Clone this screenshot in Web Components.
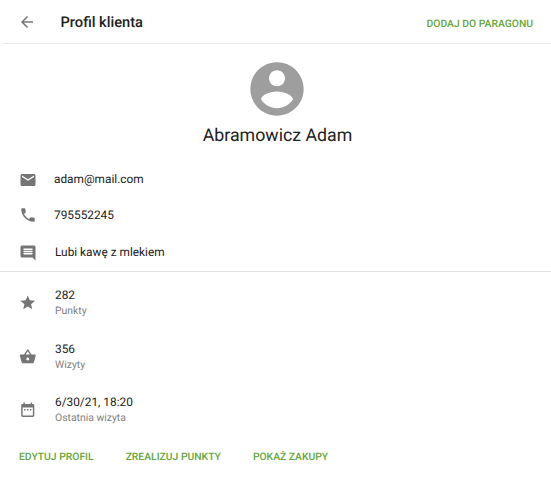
<!DOCTYPE html>
<html lang="pl">
<head>
<meta charset="utf-8">
<title>Profil klienta</title>
<style>
  body {
    background: #fff;
    color: #212121;
    font-family: Roboto, "Liberation Sans", sans-serif;
    margin: 0;
    text-rendering: geometricPrecision;
  }
</style>
</head>
<body>
<customer-profile></customer-profile>

<script>
const ICONS = {
  back: 'M20 11H7.83l5.59-5.59L12 4l-8 8 8 8 1.41-1.41L7.83 13H20v-2z',
  account: 'M12 2C6.48 2 2 6.48 2 12s4.48 10 10 10 10-4.48 10-10S17.52 2 12 2zm0 3c1.66 0 3 1.34 3 3s-1.34 3-3 3-3-1.34-3-3 1.34-3 3-3zm0 14.2c-2.5 0-4.71-1.28-6-3.22.03-1.99 4-3.08 6-3.08 1.99 0 5.97 1.09 6 3.08-1.29 1.94-3.5 3.22-6 3.22z',
  mail: 'M20 4H4c-1.1 0-1.99.9-1.99 2L2 18c0 1.1.9 2 2 2h16c1.1 0 2-.9 2-2V6c0-1.1-.9-2-2-2zm0 4l-8 5-8-5V6l8 5 8-5v2z',
  phone: 'M6.62 10.79c1.44 2.83 3.76 5.14 6.59 6.59l2.2-2.2c.27-.27.67-.36 1.02-.24 1.12.37 2.33.57 3.57.57.55 0 1 .45 1 1V20c0 .55-.45 1-1 1-9.39 0-17-7.61-17-17 0-.55.45-1 1-1h3.5c.55 0 1 .45 1 1 0 1.25.2 2.45.57 3.57.11.35.03.74-.25 1.02l-2.2 2.2z',
  comment: 'M21.99 4c0-1.1-.89-2-1.99-2H4c-1.1 0-2 .9-2 2v12c0 1.1.9 2 2 2h14l4 4-.01-18zM18 14H6v-2h12v2zm0-3H6V9h12v2zm0-3H6V6h12v2z',
  star: 'M12 17.27L18.18 21l-1.64-7.03L22 9.24l-7.19-.61L12 2 9.19 8.63 2 9.24l5.46 4.73L5.82 21z',
  basket: 'M17.21 9l-4.38-6.56c-.19-.28-.51-.42-.83-.42-.32 0-.64.14-.83.43L6.79 9H2c-.55 0-1 .45-1 1 0 .09.01.18.04.27l2.54 9.27c.23.84 1 1.46 1.92 1.46h13c.92 0 1.69-.62 1.93-1.46l2.54-9.27L23 10c0-.55-.45-1-1-1h-4.79zM9 9l3-4.4L15 9H9zm3 8c-1.1 0-2-.9-2-2s.9-2 2-2 2 .9 2 2-.9 2-2 2z',
  calendar: 'M9 11H7v2h2v-2zm4 0h-2v2h2v-2zm4 0h-2v2h2v-2zm2-7h-1V2h-2v2H8V2H6v2H5c-1.11 0-1.99.9-1.99 2L3 20c0 1.1.89 2 2 2h14c1.1 0 2-.9 2-2V6c0-1.1-.9-2-2-2zm0 16H5V9h14v11z'
};

class ProfileIcon extends HTMLElement {
  constructor() {
    super();

    const template = document.createElement( 'template' );
    template.innerHTML = `
      <style>
        :host {
          color: #757575;
          display: block;
          flex: none;
          height: var( --icon-size, 18px );
          width: var( --icon-size, 18px );
        }

        svg {
          display: block;
          fill: currentColor;
          height: 100%;
          width: 100%;
        }
      </style>
      <svg viewBox="0 0 24 24" aria-hidden="true"><path /></svg>
    `;

    // Root
    const shadowRoot = this.attachShadow( {mode: 'open'} );
    shadowRoot.appendChild( template.content.cloneNode( true ) );

    // Elements
    this.$path = shadowRoot.querySelector( 'path' );
  }

  // Attributes
  static get observedAttributes() {
    return ['name'];
  }

  // Render
  attributeChangedCallback( name, old, value ) {
    this.$path.setAttribute( 'd', ICONS[value] || '' );
  }
}

window.customElements.define( 'profile-icon', ProfileIcon );

class ProfileButton extends HTMLElement {
  constructor() {
    super();

    const template = document.createElement( 'template' );
    template.innerHTML = `
      <style>
        :host {
          display: block;
        }

        button {
          background: none;
          border: none;
          color: #64a63a;
          cursor: pointer;
          display: block;
          font: 500 10.35px/16px Roboto, "Liberation Sans", sans-serif;
          margin: 0;
          padding: 0;
          text-rendering: geometricPrecision;
          white-space: nowrap;
        }
      </style>
      <button type="button"><slot></slot></button>
    `;

    // Root
    const shadowRoot = this.attachShadow( {mode: 'open'} );
    shadowRoot.appendChild( template.content.cloneNode( true ) );
  }
}

window.customElements.define( 'profile-button', ProfileButton );

class ProfileHeader extends HTMLElement {
  constructor() {
    super();

    const template = document.createElement( 'template' );
    template.innerHTML = `
      <style>
        :host {
          align-items: center;
          border-bottom: 1px solid #e8e8e8;
          box-sizing: border-box;
          display: flex;
          height: 44px;
          margin-left: 2px;
          padding: 0 18px 0 16px;
        }

        h1 {
          flex: 1;
          font-size: 14.65px;
          font-weight: 500;
          line-height: 20px;
          margin: 1px 0 0 24.5px;
        }

        ::slotted( profile-button ) {
          margin-top: 4px;
        }
      </style>
      <profile-icon name="back"></profile-icon>
      <h1><slot></slot></h1>
      <slot name="action"></slot>
    `;

    // Root
    const shadowRoot = this.attachShadow( {mode: 'open'} );
    shadowRoot.appendChild( template.content.cloneNode( true ) );
  }
}

window.customElements.define( 'profile-header', ProfileHeader );

class ProfileRow extends HTMLElement {
  constructor() {
    super();

    const template = document.createElement( 'template' );
    template.innerHTML = `
      <style>
        :host {
          align-items: center;
          display: flex;
          padding-left: 19px;
        }

        profile-icon {
          margin-top: var( --icon-offset, 0 );
        }

        div {
          margin-left: var( --row-gap, 17px );
        }

        p {
          font-size: 11.85px;
          line-height: 16px;
          margin: 0;
        }

        ::slotted( [slot=label] ) {
          color: #808080;
          display: block;
          font-size: 10.4px;
          line-height: 15px;
        }
      </style>
      <profile-icon></profile-icon>
      <div>
        <p><slot></slot></p>
        <slot name="label"></slot>
      </div>
    `;

    // Root
    const shadowRoot = this.attachShadow( {mode: 'open'} );
    shadowRoot.appendChild( template.content.cloneNode( true ) );

    // Elements
    this.$icon = shadowRoot.querySelector( 'profile-icon' );
  }

  // Attributes
  static get observedAttributes() {
    return ['icon'];
  }

  // Render
  attributeChangedCallback( name, old, value ) {
    this.$icon.setAttribute( 'name', value );
  }
}

window.customElements.define( 'profile-row', ProfileRow );

class CustomerProfile extends HTMLElement {
  constructor() {
    super();

    const template = document.createElement( 'template' );
    template.innerHTML = `
      <style>
        :host {
          display: block;
        }

        .person {
          align-items: center;
          display: flex;
          flex-direction: column;
          padding-top: 12.5px;
        }

        .person profile-icon {
          --icon-size: 64px;
          color: #9e9e9e;
          margin-left: 3px;
        }

        h2 {
          font-size: 17.75px;
          font-weight: 400;
          line-height: 24px;
          margin: 3.5px 0 0 4px;
        }

        .contact {
          border-bottom: 1px solid #e0e0e0;
          box-sizing: border-box;
          display: grid;
          grid-template-rows: repeat( 3, 36px );
          height: 124px;
          padding-top: 13px;
        }

        .contact profile-row[icon=mail] {
          --icon-offset: 1px;
        }

        .contact profile-row[icon=comment] {
          --icon-offset: 3px;
          --row-gap: 18px;
          padding-top: 1px;
        }

        .stats {
          --icon-size: 17.5px;
          --row-gap: 18.5px;
          display: grid;
          grid-template-rows: repeat( 3, 53.5px );
          padding-top: 4px;
        }

        .stats profile-row[icon=calendar] {
          --icon-offset: -1px;
        }

        footer {
          display: flex;
          gap: 32px;
          padding: 12px 19px 0;
        }
      </style>
      <profile-header>
        Profil klienta
        <profile-button slot="action">DODAJ DO PARAGONU</profile-button>
      </profile-header>
      <section class="person">
        <profile-icon name="account"></profile-icon>
        <h2>Abramowicz Adam</h2>
      </section>
      <section class="contact">
        <profile-row icon="mail">adam@mail.com</profile-row>
        <profile-row icon="phone">795552245</profile-row>
        <profile-row icon="comment">Lubi kawę z mlekiem</profile-row>
      </section>
      <section class="stats">
        <profile-row icon="star">282<span slot="label">Punkty</span></profile-row>
        <profile-row icon="basket">356<span slot="label">Wizyty</span></profile-row>
        <profile-row icon="calendar">6/30/21, 18:20<span slot="label">Ostatnia wizyta</span></profile-row>
      </section>
      <footer>
        <profile-button>EDYTUJ PROFIL</profile-button>
        <profile-button>ZREALIZUJ PUNKTY</profile-button>
        <profile-button>POKAŻ ZAKUPY</profile-button>
      </footer>
    `;

    // Root
    const shadowRoot = this.attachShadow( {mode: 'open'} );
    shadowRoot.appendChild( template.content.cloneNode( true ) );
  }
}

window.customElements.define( 'customer-profile', CustomerProfile );
</script>
</body>
</html>
